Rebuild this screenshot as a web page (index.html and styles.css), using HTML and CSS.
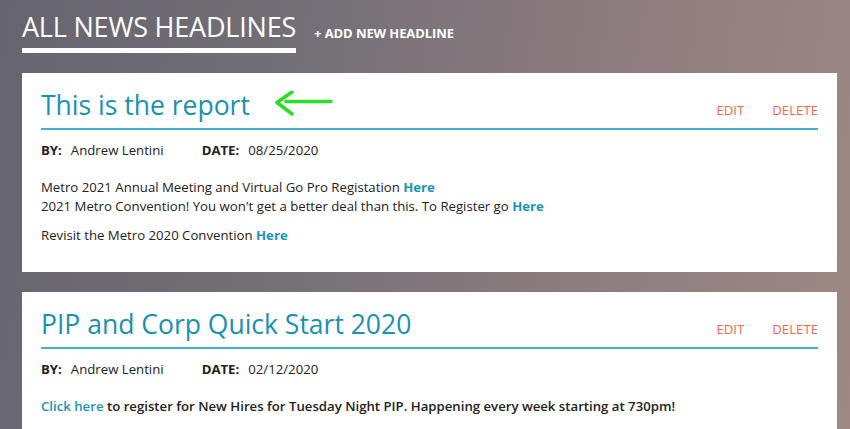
FILE: index.html
```html
<!DOCTYPE html>
<html>
<head>
<meta charset="utf-8">
<link rel="stylesheet" href="styles.css">
</head>
<body>
<div class="page">
  <header class="top">
    <h1 class="page-title">ALL NEWS HEADLINES</h1>
    <a class="add-link">+ ADD NEW HEADLINE</a>
  </header>

  <section class="card">
    <div class="card-head">
      <h2 class="card-title">This is the report</h2>
      <svg class="arrow" width="60" height="28" viewBox="0 0 60 28">
        <path d="M57 10.5 H12 M18 1 L3 11.5 L18 23" fill="none" stroke="#27e027" stroke-width="3.6" stroke-linecap="round" stroke-linejoin="round"/>
      </svg>
      <div class="actions"><a class="act">EDIT</a><a class="act">DELETE</a></div>
    </div>
    <div class="meta"><span class="m"><b>BY:</b>Andrew Lentini</span><span class="m"><b>DATE:</b>08/25/2020</span></div>
    <div class="body">
      <p>Metro 2021 Annual Meeting and Virtual Go Pro Registation <a class="lnk">Here</a><br>2021 Metro Convention! You won't get a better deal than this. To Register go <a class="lnk">Here</a></p>
      <p>Revisit the Metro 2020 Convention <a class="lnk">Here</a></p>
    </div>
  </section>

  <section class="card">
    <div class="card-head">
      <h2 class="card-title">PIP and Corp Quick Start 2020</h2>
      <div class="actions"><a class="act">EDIT</a><a class="act">DELETE</a></div>
    </div>
    <div class="meta"><span class="m"><b>BY:</b>Andrew Lentini</span><span class="m"><b>DATE:</b>02/12/2020</span></div>
    <div class="body">
      <p class="strong"><a class="lnk">Click here</a> to register for New Hires for Tuesday Night PIP. Happening every week starting at 730pm!</p>
    </div>
  </section>
</div>
</body>
</html>
```

FILE: styles.css
```css
html, body {
  margin: 0;
  padding: 0;
  height: 100%;
  overflow: hidden;
}
body {
  font-family: "Open Sans", "Liberation Sans", sans-serif;
  background: linear-gradient(100deg, #66646f 0%, #747077 35%, #8c7b7e 65%, #9e8984 100%);
  color: #222;
}
.page {
  padding: 0 13px 0 22px;
}
.top {
  display: flex;
  align-items: flex-start;
  gap: 18px;
}
.page-title {
  margin: 0;
  padding-top: 10px;
  font-size: 27px;
  font-weight: 400;
  line-height: 34px;
  color: #fff;
  border-bottom: 5px solid #fff;
  padding-bottom: 4px;
  letter-spacing: -0.2px;
}
.add-link {
  margin-top: 25px;
  font-size: 13px;
  font-weight: 700;
  color: #fff;
  line-height: 17px;
  letter-spacing: -0.1px;
}
.card {
  background: #fff;
  margin-top: 20px;
  padding: 14px 19px 27px 19px;
}
.card-head {
  display: flex;
  align-items: center;
  padding-bottom: 5px;
  border-bottom: 2px solid #3fb3d2;
}
.card-title {
  margin: 0;
  font-size: 26.5px;
  font-weight: 400;
  line-height: 36px;
  color: #1a91ae;
}
.arrow {
  margin-left: 24px;
  margin-top: -1px;
}
.actions {
  margin-left: auto;
  display: flex;
  gap: 28px;
  padding-top: 10px;
}
.act {
  font-size: 13.2px;
  color: #f0694d;
  line-height: 18px;
}
.meta {
  display: flex;
  gap: 38px;
  margin-top: 11px;
  font-size: 13.2px;
  line-height: 19px;
}
.meta b {
  font-weight: 700;
  margin-right: 9px;
}
.body {
  margin-top: 18px;
  font-size: 13.2px;
  line-height: 19px;
}
.body p {
  margin: 0 0 10px 0;
}
.body p:last-child {
  margin-bottom: 0;
}
.lnk {
  color: #1a93b5;
  font-weight: 700;
}
.strong {
  font-weight: 600;
}
.strong .lnk {
  font-weight: 600;
}
```
